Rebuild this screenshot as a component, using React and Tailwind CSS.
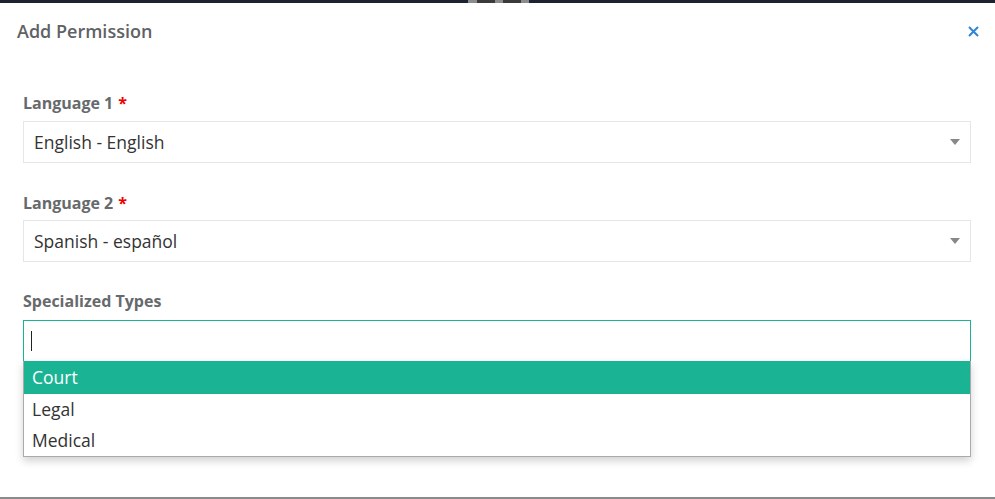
import { useState } from "react";

const ChevronDown = () => (
  <svg width="10" height="6" viewBox="0 0 10 6" className="shrink-0">
    <path d="M0 0 L10 0 L5 6 Z" fill="#888" />
  </svg>
);

function SelectBox({ value }) {
  return (
    <div className="h-[42px] border border-[#e5e6e7] bg-white flex items-center pl-[10px] pr-[10px]">
      <span className="flex-1 text-[17.5px] text-[#333]">{value}</span>
      <ChevronDown />
    </div>
  );
}

function Label({ children, required }) {
  return (
    <div className="text-[16px] leading-[20px] font-bold text-[#676a6c]">
      {children}
      {required && <span className="text-[#ed0000] ml-[5px]">*</span>}
    </div>
  );
}

export default function App() {
  const [types] = useState(["Court", "Legal", "Medical"]);
  const active = 0;

  return (
    <div
      className="h-[499px] w-full bg-white flex flex-col border-b-2 border-[#8a8a8a]"
      style={{ fontFamily: '"Open Sans", "Liberation Sans", sans-serif' }}
    >
      {/* top window strip */}
      <div className="h-[3px] bg-[#1b2230] flex justify-center shrink-0">
        <div className="w-[61px] bg-[#8c8c8c] flex justify-center gap-[8px] ml-[2px]">
          <div className="w-[18px] bg-[#3a3a3a]" />
          <div className="w-[18px] bg-[#3a3a3a]" />
        </div>
      </div>

      <div className="h-[56px] flex items-center pl-[17px] pr-[16px] shrink-0">
        <h4 className="flex-1 text-[18px] font-semibold text-[#5f6264]">Add Permission</h4>
        <button className="w-[12px] h-[12px] flex items-center justify-center">
          <svg width="11" height="11" viewBox="0 0 11 11">
            <path d="M1 1 L10 10 M10 1 L1 10" stroke="#2f86d6" strokeWidth="2" />
          </svg>
        </button>
      </div>

      <div className="flex-1 pl-[23px] pr-[24px] pt-[34px]">
        <Label required>Language 1</Label>
        <div className="mt-[8px]">
          <SelectBox value="English - English" />
        </div>

        <div className="mt-[30px]">
          <Label required>Language 2</Label>
        </div>
        <div className="mt-[7px]">
          <SelectBox value="Spanish - español" />
        </div>

        <div className="mt-[29px]">
          <Label>Specialized Types</Label>
        </div>
        <div className="mt-[9px] relative">
          <div className="h-[42px] border border-[#1ab394] flex items-center pl-[7px]">
            <div className="w-px h-[20px] bg-[#222]" />
          </div>
          <div className="absolute left-0 right-0 top-[41px] bg-white border border-[#aaa] border-t-0 shadow-[0_4px_8px_rgba(0,0,0,0.18)]">
            {types.map((t, i) => (
              <div
                key={t}
                className={
                  i === active
                    ? "h-[33px] flex items-center pl-[8px] text-[17.5px] bg-[#1ab394] text-white"
                    : "h-[31px] flex items-center pl-[8px] text-[17.5px] text-[#333]"
                }
              >
                {t}
              </div>
            ))}
          </div>
        </div>
      </div>
    </div>
  );
}
